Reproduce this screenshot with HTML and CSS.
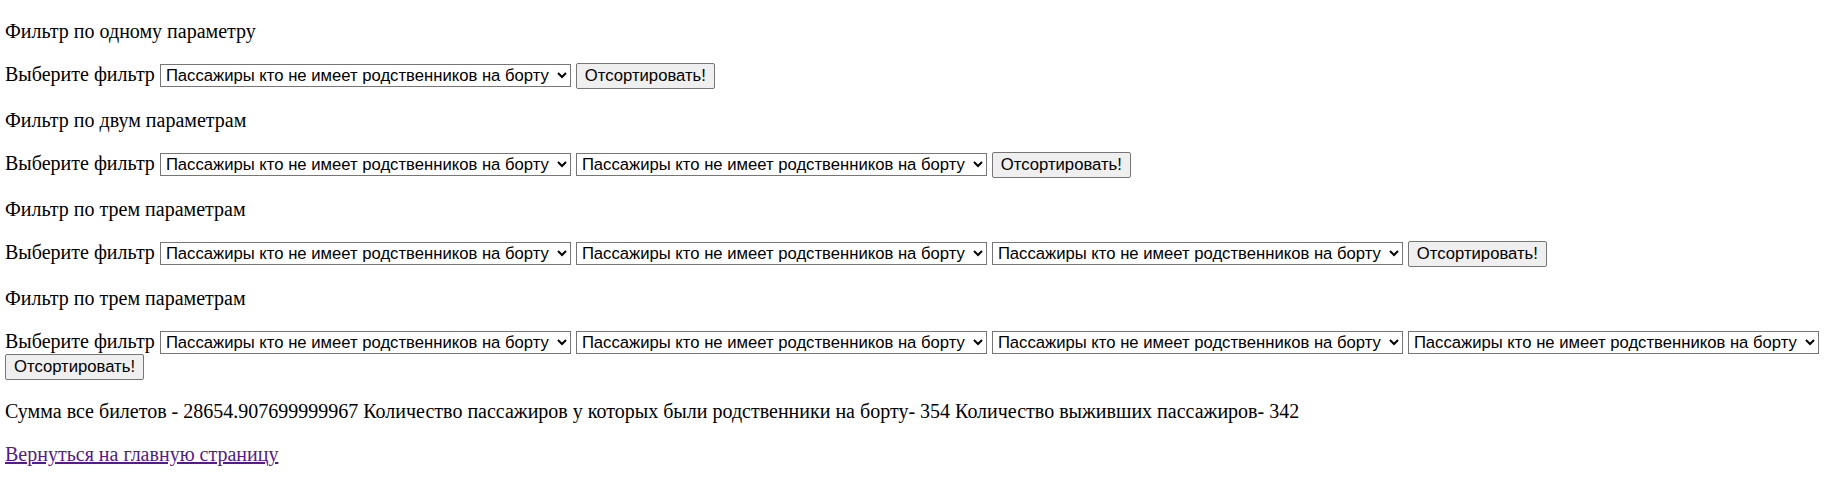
FILE: index.html
```html
<!DOCTYPE html>
<html lang="ru">
<head>
<meta charset="utf-8">
<title>Фильтры</title>
<link rel="stylesheet" href="styles.css">
</head>
<body>
<p class="title">Фильтр по одному параметру</p>
<form class="row">Выберите фильтр <select class="sel"><option>Пассажиры кто не имеет родственников на борту</option></select> <button class="btn" type="button">Отсортировать!</button></form>
<p class="title">Фильтр по двум параметрам</p>
<form class="row">Выберите фильтр <select class="sel"><option>Пассажиры кто не имеет родственников на борту</option></select> <select class="sel"><option>Пассажиры кто не имеет родственников на борту</option></select> <button class="btn" type="button">Отсортировать!</button></form>
<p class="title">Фильтр по трем параметрам</p>
<form class="row">Выберите фильтр <select class="sel"><option>Пассажиры кто не имеет родственников на борту</option></select> <select class="sel"><option>Пассажиры кто не имеет родственников на борту</option></select> <select class="sel"><option>Пассажиры кто не имеет родственников на борту</option></select> <button class="btn" type="button">Отсортировать!</button></form>
<p class="title">Фильтр по трем параметрам</p>
<form class="row">Выберите фильтр <select class="sel"><option>Пассажиры кто не имеет родственников на борту</option></select> <select class="sel"><option>Пассажиры кто не имеет родственников на борту</option></select> <select class="sel"><option>Пассажиры кто не имеет родственников на борту</option></select> <select class="sel"><option>Пассажиры кто не имеет родственников на борту</option></select> <button class="btn" type="button">Отсортировать!</button></form>
<p class="result">Сумма все билетов - 28654.907699999967 Количество пассажиров у которых были родственники на борту- 354 Количество выживших пассажиров- 342</p>
<p class="back"><a class="link" href="#">Вернуться на главную страницу</a></p>
</body>
</html>
```
FILE: styles.css
```css
html, body {
  background: #ffffff;
}
body {
  margin: 0 5px;
  font-family: "Liberation Serif", "Times New Roman", serif;
  font-size: 20px;
  color: #000000;
}
.title, .result, .back, .row {
  margin: 20px 0;
}
.sel {
  font-family: "Liberation Sans", Arial, sans-serif;
  font-size: 16.67px;
  color: #000;
  background: #fff;
  border: 1px solid #767676;
  border-radius: 0;
  height: 23px;
  width: 411px;
  padding: 0 1px;
}
.btn {
  font-family: "Liberation Sans", Arial, sans-serif;
  font-size: 16.67px;
  color: #000;
  background: #efefef;
  border: 1px solid #767676;
  border-radius: 2px;
  height: 26px;
  width: 139px;
  padding: 1px 6px;
}
.link {
  color: #551a8b;
}
```
